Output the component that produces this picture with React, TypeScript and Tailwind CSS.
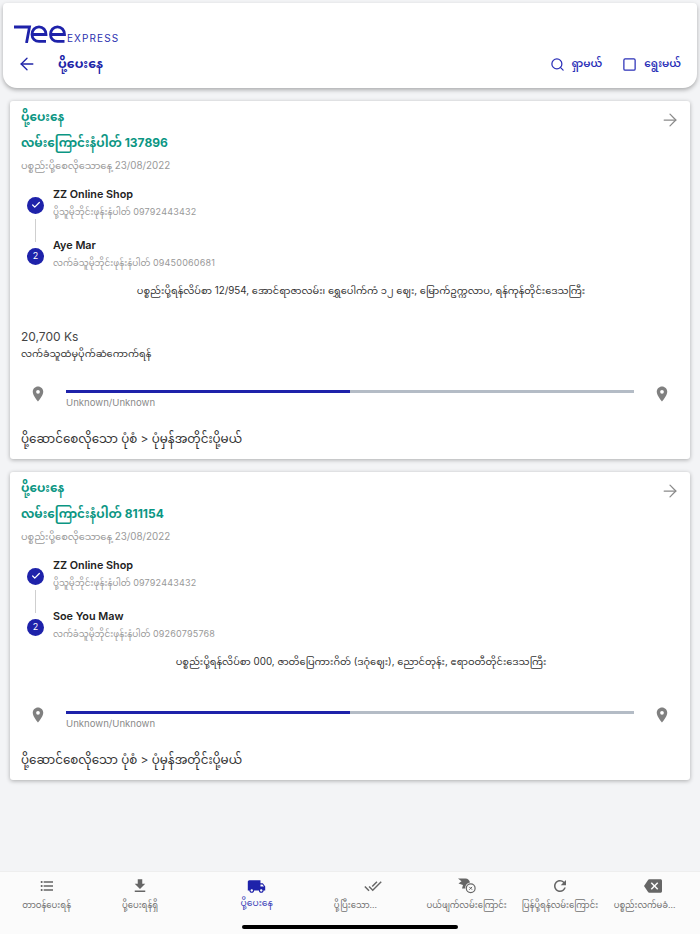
import React from "react";
import { ArrowLeft, ArrowRight, Search, Square, Check } from "lucide-react";
import { MdFormatListBulleted, MdFileDownload, MdLocalShipping, MdDoneAll, MdRefresh, MdBackspace, MdLocationOn } from "react-icons/md";

const font = "font-['Inter','Noto_Sans','Noto_Sans_Myanmar','Padauk','DejaVu_Sans',sans-serif]";

function Logo() {
  return (
    <div className="flex items-end h-[20px]">
      <svg width="52" height="18" viewBox="0 0 52 18" fill="none" stroke="#1e22aa" strokeWidth="2.8">
        <path d="M0 2H15.5L12.5 18" />
        <path d="M18 9.5H32C32 5 29 1.8 25 1.8C21 1.8 18 5 18 9.5C18 13.5 21 16.4 25 16.4H32" />
        <path d="M36.5 9.5H50.5C50.5 5 47.5 1.8 43.5 1.8C39.5 1.8 36.5 5 36.5 9.5C36.5 13.5 39.5 16.4 43.5 16.4H50.5" />
      </svg>
      <span className="text-[10px] leading-[9px] tracking-[1.1px] text-[#2b30b0] ml-[1px] font-['Inter',sans-serif]">EXPRESS</span>
    </div>
  );
}

function Header() {
  return (
    <div className="mx-[3px] mt-[3px] h-[85px] bg-white rounded-b-[14px] rounded-t-[4px] shadow-[0_2px_4px_rgba(0,0,0,0.3)] px-[11px] pt-[20px] relative z-10">
      <Logo />
      <div className="flex items-center justify-between mt-[9px] text-[#2024a8] h-[24px]">
        <div className="flex items-center">
          <ArrowLeft size={20} strokeWidth={1.6} className="ml-[3px]" />
          <span className="ml-[21px] text-[12.5px] font-bold">ပို့ပေးနေ</span>
        </div>
        <div className="flex items-center mr-[5px] text-[#2b30b8]">
          <Search size={15} strokeWidth={2} />
          <span className="ml-[7px] text-[10.5px] font-semibold">ရှာမယ်</span>
          <Square size={15} strokeWidth={2} className="ml-[20px]" />
          <span className="ml-[7px] text-[10.5px] font-semibold">ရွေးမယ်</span>
        </div>
      </div>
    </div>
  );
}

function Bullet({ done }: { done?: boolean }) {
  return (
    <div className="w-[17px] h-[17px] rounded-full bg-[#1e22aa] flex items-center justify-center text-white text-[9px]">
      {done ? <Check size={10} strokeWidth={3} /> : "2"}
    </div>
  );
}

function Person({ name, label, phone, done }: { name: string; label: string; phone: string; done?: boolean }) {
  return (
    <div className="flex items-center h-[34px]">
      <div className="w-[17px] ml-[6px] mt-[6px]"><Bullet done={done} /></div>
      <div className="ml-[9px] mt-[4px]">
        <div className="text-[10.8px] leading-[14px] font-semibold text-[#222]">{name}</div>
        <div className="text-[8.8px] leading-[16px] mt-[2px] text-[#999]">
          {label} <span className="text-[9px] tracking-[0.2px]">{phone}</span>
        </div>
      </div>
    </div>
  );
}

function Card({ id, name, phone, address, cod }: { id: string; name: string; phone: string; address: string; cod?: boolean }) {
  return (
    <div className="bg-white rounded-[3px] shadow-[0_1px_4px_rgba(0,0,0,0.3)] px-[11px] relative">
      <ArrowRight size={20} strokeWidth={1.5} className="absolute right-[10px] top-[9px] text-[#8a8a8a]" />
      <div className="text-[12px] leading-[16px] pt-[8px] font-bold text-[#0b9683]">ပို့ပေးနေ</div>
      <div className="text-[12px] leading-[18px] mt-[9px] font-bold text-[#0b9683]">လမ်းကြောင်းနံပါတ် {id}</div>
      <div className="text-[9.8px] leading-[16px] mt-[6px] text-[#999]">ပစ္စည်းပို့စေလိုသောနေ့ 23/08/2022</div>
      <div className="mt-[11px]">
        <Person name="ZZ Online Shop" label="ပို့သူမိုဘိုင်းဖုန်းနံပါတ်" phone="09792443432" done />
        <div className="w-px h-[23px] bg-[#cfcfcf] ml-[14px]" />
        <div className="-mt-[6px]">
          <Person name={name} label="လက်ခံသူမိုဘိုင်းဖုန်းနံပါတ်" phone={phone} />
        </div>
      </div>
      <div className="text-center text-[9.8px] leading-[16px] mt-[13px] pl-[22px] text-[#333]">{address}</div>
      {cod ? (
        <>
          <div className="text-[12px] leading-[14px] mt-[31px] text-[#444]">20,700 Ks</div>
          <div className="text-[9.75px] leading-[16px] mt-[2px] text-[#333]">လက်ခံသူထံမှပိုက်ဆံကောက်ရန်</div>
        </>
      ) : (
        <div className="h-[13px]" />
      )}
      <div className="flex items-start mt-[28px] ml-[8px] mr-[8px]">
        <MdLocationOn size={18} className="text-[#808080] shrink-0 -mt-[5px]" />
        <div className="flex-1 ml-[19px] mr-[19px]">
          <div className="flex h-[3px]">
            <div className="w-1/2 bg-[#1e22aa]" />
            <div className="w-1/2 bg-[#b4bcc6]" />
          </div>
          <div className="text-[9.6px] leading-[14px] mt-[3px] text-[#8a8a8a]">Unknown/Unknown</div>
        </div>
        <MdLocationOn size={18} className="text-[#808080] shrink-0 -mt-[5px]" />
      </div>
      <div className="text-[11.9px] leading-[18px] mt-[20px] pb-[11px] text-[#333]">ပို့ဆောင်စေလိုသော ပုံစံ &gt; ပုံမှန်အတိုင်းပို့မယ်</div>
    </div>
  );
}

function ReturnIcon() {
  return (
    <svg width="18" height="16" viewBox="0 0 18 16">
      <path d="M0 0.5H7.5C10 0.5 11.5 2.5 12 4.5C9 5 7 7.5 7.3 10.5H4L5 7L0.5 5.5L3.5 3.2Z" fill="#666" />
      <circle cx="12.7" cy="10.3" r="4.4" fill="none" stroke="#666" strokeWidth="1.2" />
      <path d="M11.3 8.9L14.1 11.7M14.1 8.9L11.3 11.7" stroke="#666" strokeWidth="1" />
    </svg>
  );
}

const tabs: { label: string; icon: React.ReactNode; active?: boolean; cut?: boolean }[] = [
  { label: "တာဝန်ပေးရန်", icon: <MdFormatListBulleted size={16} /> },
  { label: "ပို့ပေးရန်ရှိ", icon: <MdFileDownload size={18} /> },
  { label: "ပို့ပေးနေ", icon: <MdLocalShipping size={19} />, active: true },
  { label: "ပို့ပြီးသော...", icon: <MdDoneAll size={18} />, cut: true },
  { label: "ပယ်ဖျက်လမ်းကြောင်း", icon: <ReturnIcon /> },
  { label: "ပြန်ပို့ရန်လမ်းကြောင်း", icon: <MdRefresh size={18} /> },
  { label: "ပစ္စည်းလက်မခံ...", icon: <MdBackspace size={18} />, cut: true },
];

function BottomNav() {
  return (
    <div className="h-[63px] bg-[#fbfbfb] border-t border-[#eeeeee] relative flex pt-[5px]">
      {tabs.map((t) => (
        <div key={t.label} className={`min-w-0 flex flex-col items-center ${t.active ? "w-[140px] text-[#1e22aa]" : "w-[93.33px] text-[#666]"}`}>
          <div className="h-[18px] flex items-center justify-center">{t.icon}</div>
          <div
            className={`leading-[14px] whitespace-nowrap ${t.active ? "text-[9.2px] mt-[1px] text-[#3a3eb8]" : "text-[8.5px] mt-[3px] text-[#707070]"} ${t.cut ? "self-start ml-[7px]" : ""}`}
          >
            {t.label}
          </div>
        </div>
      ))}
      <div className="absolute left-[242px] bottom-[5px] w-[216px] h-[4px] rounded-full bg-black" />
    </div>
  );
}

export default function App() {
  return (
    <div className={`w-[700px] h-[934px] bg-[#f3f4f6] flex flex-col overflow-hidden ${font}`}>
      <Header />
      <div className="flex-1 flex flex-col gap-[13px] px-[10px] pt-[13px]">
        <Card id="137896" name="Aye Mar" phone="09450060681" cod address="ပစ္စည်းပို့ရန်လိပ်စာ 12/954, အောင်ရာဇာလမ်း၊ ရွှေပေါက်ကံ ၁၂ ဈေး, မြောက်ဥက္ကလာပ, ရန်ကုန်တိုင်းဒေသကြီး" />
        <Card id="811154" name="Soe You Maw" phone="09260795768" address="ပစ္စည်းပို့ရန်လိပ်စာ 000, ဇာတိပြေကားဂိတ် (ဒဂုံဈေး), ညောင်တုန်း, ဧရာဝတီတိုင်းဒေသကြီး" />
      </div>
      <BottomNav />
    </div>
  );
}
